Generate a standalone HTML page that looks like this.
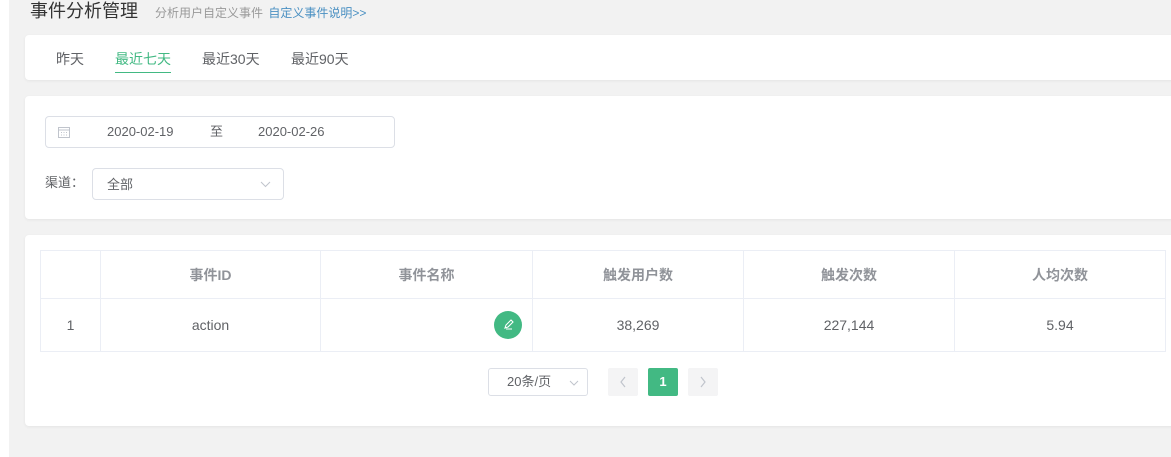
<!DOCTYPE html>
<html><head><meta charset="utf-8"><style>
*{box-sizing:border-box;margin:0;padding:0}
body{width:1171px;height:457px;overflow:hidden;background:#fff;font-family:"Liberation Sans","Noto Sans CJK SC",sans-serif;color:#606266;position:relative}
.bg{position:absolute;left:9px;top:0;right:0;bottom:0;background:#f2f2f2}
.card{position:absolute;left:25px;width:1160px;background:#fff;border-radius:4px;box-shadow:0 1px 3px rgba(0,0,0,.06)}
.abs{position:absolute}
table{border-collapse:collapse;position:absolute;left:40px;top:250px;width:1126px;font-size:14px}
td,th{border:1px solid #ebeef5;text-align:center;color:#606266}
th{height:48px;font-weight:bold;color:#909399}
td{height:53px}
.ln{line-height:30px;top:0}
</style></head><body>
<div class="bg"></div>
<div class="abs" style="left:30px;top:0;font-size:18px;color:#333;line-height:22px">事件分析管理</div>
<div class="abs" style="left:155px;top:4px;font-size:12px;color:#999">分析用户自定义事件 <span style="color:#4a90c2;margin-left:2px">自定义事件说明&gt;&gt;</span></div>
<div class="card" style="top:35px;height:45px">
 <div class="abs" style="left:31px;top:14px;font-size:14px;color:#606266">昨天</div>
 <div class="abs" style="left:90px;top:14px;font-size:14px;color:#42b983;border-bottom:1px solid #42b983;padding-bottom:3px">最近七天</div>
 <div class="abs" style="left:177px;top:14px;font-size:14px">最近30天</div>
 <div class="abs" style="left:266px;top:14px;font-size:14px">最近90天</div>
</div>
<div class="card" style="top:96px;height:123px">
 <div class="abs" style="left:20px;top:20px;width:350px;height:32px;border:1px solid #dcdfe6;border-radius:4px;font-size:13px;color:#606266">
  <svg class="abs" style="left:12px;top:9px" width="12" height="12" viewBox="0 0 12 12"><rect x="0.5" y="1.5" width="11" height="10" fill="none" stroke="#c0c4cc"/><line x1="0.5" y1="4" x2="11.5" y2="4" stroke="#c0c4cc"/><path d="M3 6.5h1M5.5 6.5h1M8 6.5h1M3 9h1M5.5 9h1M8 9h1" stroke="#c0c4cc"/></svg>
  <span class="abs ln" style="left:61px">2020-02-19</span>
  <span class="abs ln" style="left:164px;top:0">至</span>
  <span class="abs ln" style="left:212px">2020-02-26</span>
 </div>
 <div class="abs" style="left:20px;top:72px;line-height:30px;font-size:13px">渠道：</div>
 <div class="abs" style="left:67px;top:72px;width:192px;height:32px;border:1px solid #dcdfe6;border-radius:4px;font-size:13px"><span class="abs ln" style="left:14px;top:1px">全部</span>
  <svg class="abs" style="left:167px;top:12px" width="11" height="7" viewBox="0 0 11 7"><path d="M1 1l4.5 4.5L10 1" fill="none" stroke="#c0c4cc"/></svg></div>
</div>
<div class="card" style="top:235px;height:191px"></div>
<table>
<tr><th style="width:60px"></th><th style="width:220px">事件ID</th><th style="width:212px">事件名称</th><th style="width:211px">触发用户数</th><th style="width:211px">触发次数</th><th>人均次数</th></tr>
<tr><td>1</td><td>action</td><td style="position:relative"><div class="abs" style="right:10px;top:12px;width:28px;height:28px;border-radius:50%;background:#42b983"><svg width="28" height="28" viewBox="0 0 28 28"><path d="M11 17l1-3 5-5 2 2-5 5z M12 18h6" fill="none" stroke="#fff" stroke-width="1.1"/></svg></div></td><td>38,269</td><td>227,144</td><td>5.94</td></tr>
</table>
<div class="abs" style="left:488px;top:368px;width:100px;height:28px;border:1px solid #dcdfe6;border-radius:3px;font-size:13px"><span class="abs" style="left:18px;top:1px;line-height:24px">20条/页</span><svg class="abs" style="left:80px;top:11px" width="10" height="6" viewBox="0 0 10 6"><path d="M1 1l4 4 4-4" fill="none" stroke="#c0c4cc"/></svg></div>
<div class="abs" style="left:608px;top:368px;width:30px;height:28px;background:#f4f4f5;border-radius:2px"><svg width="30" height="28" viewBox="0 0 30 28"><path d="M17 9l-4 5 4 5" fill="none" stroke="#c0c4cc" stroke-width="1.2"/></svg></div>
<div class="abs" style="left:648px;top:368px;width:30px;height:28px;background:#42b983;border-radius:2px;color:#fff;text-align:center;line-height:28px;font-size:13px;font-weight:bold">1</div>
<div class="abs" style="left:688px;top:368px;width:30px;height:28px;background:#f4f4f5;border-radius:2px"><svg width="30" height="28" viewBox="0 0 30 28"><path d="M13 9l4 5-4 5" fill="none" stroke="#c0c4cc" stroke-width="1.2"/></svg></div>
</body></html>
